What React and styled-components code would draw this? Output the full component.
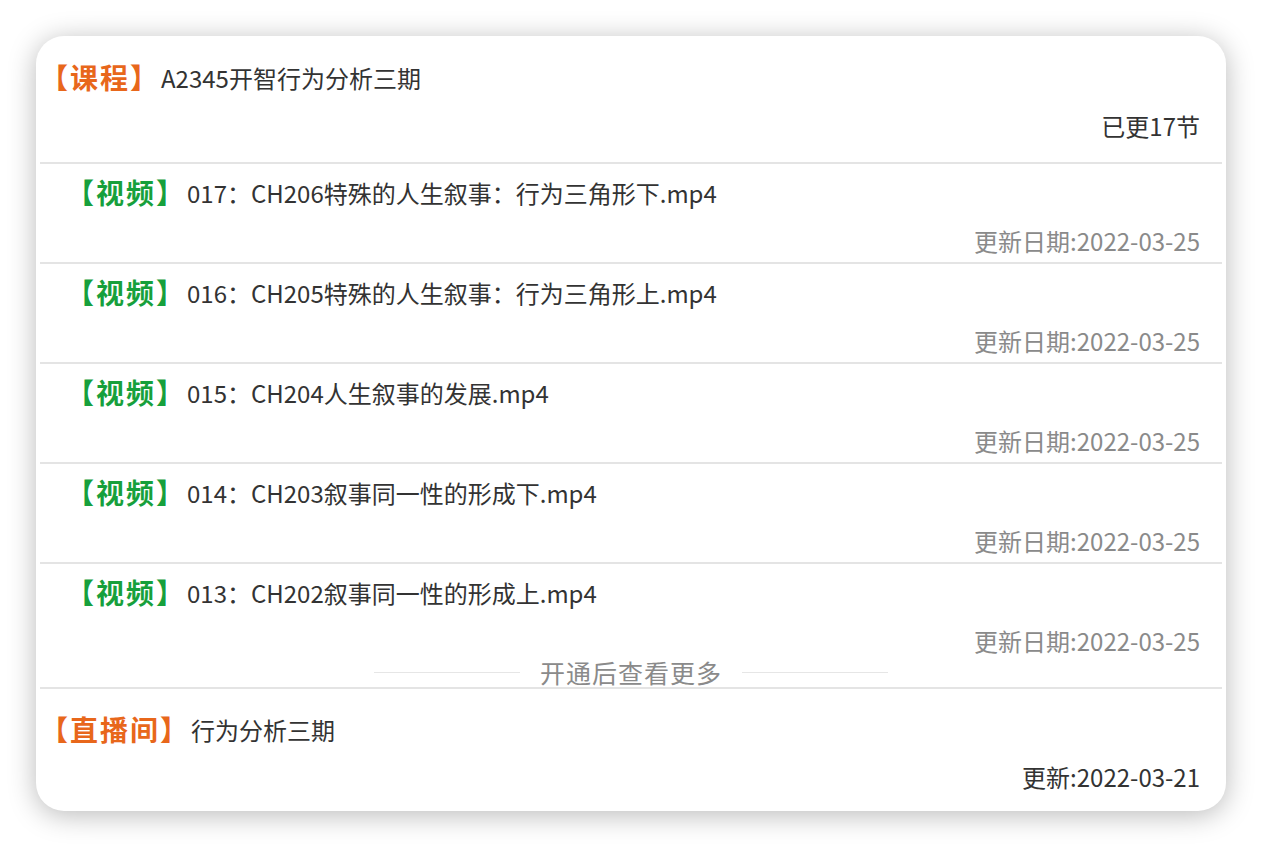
import React from 'react';
import styled, { createGlobalStyle } from 'styled-components';

const GlobalStyle = createGlobalStyle`
  html, body {
    margin: 0;
    padding: 0;
    background: #ffffff;
    font-family: "Noto Sans CJK SC", "Noto Sans", sans-serif;
  }
`;

const Page = styled.div`
  padding: 36px;
  width: 1190px;
`;

const Card = styled.div`
  background: #ffffff;
  border-radius: 28px;
  box-shadow: 0 4px 28px rgba(0, 0, 0, 0.28);
  padding: 0 4px;
  overflow: hidden;
`;

const Section = styled.div`
  display: flex;
  flex-direction: column;
  padding: ${p => p.$pad};
  border-bottom: ${p => (p.$last ? 'none' : '2px solid #e4e4e4')};
`;

const TitleLine = styled.div`
  display: flex;
  align-items: center;
  height: 32px;
  padding-left: ${p => p.$indent}px;
  white-space: nowrap;
`;

const Tag = styled.span`
  font-size: 28px;
  line-height: 32px;
  font-weight: 700;
  color: ${p => p.$color};
  letter-spacing: 2px;
  margin-right: 1px;
`;

const Title = styled.span`
  font-size: 24px;
  color: #333333;
`;

const MetaLine = styled.div`
  height: 32px;
  line-height: 32px;
  margin-top: ${p => p.$gap}px;
  padding-right: 22px;
  text-align: right;
  font-size: 24px;
  color: ${p => (p.$muted ? '#8a8a8a' : '#333333')};
`;

const MoreRow = styled.div`
  display: flex;
  align-items: center;
  justify-content: center;
  height: 26px;
  margin-top: 2px;
  margin-bottom: 2px;
  gap: 20px;
`;

const MoreRule = styled.div`
  width: 146px;
  height: 1px;
  background: #e6e6e6;
`;

const MoreText = styled.span`
  font-size: 25px;
  color: #8a8a8a;
  letter-spacing: 1px;
`;

const ORANGE = '#e8671b';
const GREEN = '#17a03c';

const videos = [
  '017：CH206特殊的人生叙事：行为三角形下.mp4',
  '016：CH205特殊的人生叙事：行为三角形上.mp4',
  '015：CH204人生叙事的发展.mp4',
  '014：CH203叙事同一性的形成下.mp4',
  '013：CH202叙事同一性的形成上.mp4',
];

export default function App() {
  return (
    <Page>
      <GlobalStyle />
      <Card>
        <Section $pad="25px 0 20px">
          <TitleLine $indent={0}>
            <Tag $color={ORANGE}>【课程】</Tag>
            <Title>A2345开智行为分析三期</Title>
          </TitleLine>
          <MetaLine $gap={17}>已更17节</MetaLine>
        </Section>

        {videos.map((v, i) => {
          const last = i === videos.length - 1;
          return (
            <Section key={v} $pad={last ? '12px 0 0' : '12px 0 5px'}>
              <TitleLine $indent={26}>
                <Tag $color={GREEN}>【视频】</Tag>
                <Title>{v}</Title>
              </TitleLine>
              <MetaLine $gap={17} $muted>更新日期:2022-03-25</MetaLine>
              {last && (
                <MoreRow>
                  <MoreRule />
                  <MoreText>开通后查看更多</MoreText>
                  <MoreRule />
                </MoreRow>
              )}
            </Section>
          );
        })}

        <Section $pad="24px 0 18px" $last>
          <TitleLine $indent={0}>
            <Tag $color={ORANGE}>【直播间】</Tag>
            <Title>行为分析三期</Title>
          </TitleLine>
          <MetaLine $gap={16}>更新:2022-03-21</MetaLine>
        </Section>
      </Card>
    </Page>
  );
}
